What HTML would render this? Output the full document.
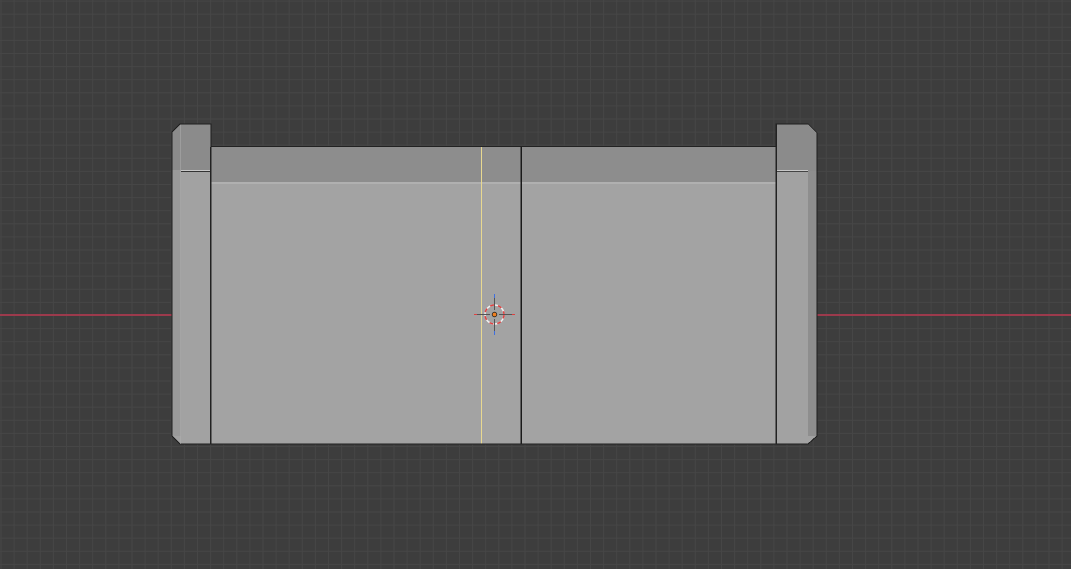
<!DOCTYPE html>
<html><head><meta charset="utf-8"><style>
html,body{margin:0;padding:0;background:#3d3d3d;overflow:hidden}
svg{display:block}
</style></head><body>
<svg width="1071" height="569" viewBox="0 0 1071 569" xmlns="http://www.w3.org/2000/svg" shape-rendering="crispEdges">
<defs>
<pattern id="g" x="0.5" y="0.6" width="13.1" height="13.1" patternUnits="userSpaceOnUse">
<rect x="0" y="0" width="13.1" height="1" fill="#464646"/>
<rect x="0" y="0" width="1" height="13.1" fill="#464646"/>
</pattern>
</defs>
<rect width="1071" height="569" fill="#3d3d3d"/>
<rect width="1071" height="569" fill="url(#g)"/>
<!-- red axis -->
<rect x="0" y="314" width="1071" height="2" fill="#9c3a4c"/>
<!-- back wall -->
<rect x="211" y="147" width="565" height="297" fill="#a3a3a3"/>
<rect x="211" y="147" width="565" height="35" fill="#8d8d8d"/>
<rect x="211" y="182" width="565" height="2" fill="#b0b0b0"/>
<rect x="211" y="146" width="565" height="1" fill="#222"/>
<!-- left post -->
<polygon points="180,124 211,124 211,444 180,444 172,436 172,132" fill="#a2a2a2" stroke="#1e1e1e" stroke-width="1"/>
<rect x="172.5" y="132" width="8.5" height="304" fill="#9a9a9a"/>
<polygon points="180,124.5 210.5,124.5 210.5,170 172.5,170 172.5,132" fill="#8b8b8b"/>
<rect x="181" y="170" width="30" height="1" fill="#c8c8c8"/>
<rect x="181" y="171" width="30" height="1" fill="#333"/>
<rect x="180" y="125" width="1" height="319" fill="#b0b0b0" opacity="0.5"/>
<!-- right post -->
<polygon points="776,124 808,124 817,133 817,436 808,444 776,444" fill="#a2a2a2" stroke="#1e1e1e" stroke-width="1"/>
<rect x="808" y="133" width="8.5" height="303" fill="#8e8e8e"/>
<polygon points="776.5,124.5 808,124.5 816.5,133 816.5,171 776.5,171" fill="#8b8b8b"/>
<rect x="776" y="170" width="32" height="1" fill="#c8c8c8"/>
<rect x="776" y="171" width="32" height="1" fill="#444"/>
<!-- vertical lines -->
<rect x="210" y="147" width="1.5" height="297" fill="#222"/>
<rect x="775.5" y="124" width="1.5" height="320" fill="#222"/>
<rect x="481" y="147" width="1" height="297" fill="#e8d890"/>
<rect x="520.5" y="147" width="1.5" height="297" fill="#1a1a1a"/>
<rect x="211" y="443.5" width="565" height="1" fill="#222"/>
<!-- 3D cursor -->
<g shape-rendering="geometricPrecision">
<circle cx="494.5" cy="314.5" r="9.5" fill="none" stroke="#f0f0f0" stroke-width="1.5"/>
<circle cx="494.5" cy="314.5" r="9.5" fill="none" stroke="#e04040" stroke-width="1.5" stroke-dasharray="4 4"/>
<line x1="474" y1="314.5" x2="490" y2="314.5" stroke="#555" stroke-width="1"/>
<line x1="499" y1="314.5" x2="515" y2="314.5" stroke="#555" stroke-width="1"/>
<line x1="474" y1="314.5" x2="477" y2="314.5" stroke="#e04040" stroke-width="1"/>
<line x1="512" y1="314.5" x2="515" y2="314.5" stroke="#e04040" stroke-width="1"/>
<line x1="494.5" y1="294" x2="494.5" y2="310" stroke="#555" stroke-width="1"/>
<line x1="494.5" y1="319" x2="494.5" y2="335" stroke="#555" stroke-width="1"/>
<line x1="494.5" y1="294" x2="494.5" y2="298" stroke="#4070e0" stroke-width="1"/>
<line x1="494.5" y1="331" x2="494.5" y2="335" stroke="#4070e0" stroke-width="1"/>
<circle cx="494.5" cy="314.5" r="2.3" fill="#f08020" stroke="#222" stroke-width="0.8"/>
</g>
</svg>
</body></html>
